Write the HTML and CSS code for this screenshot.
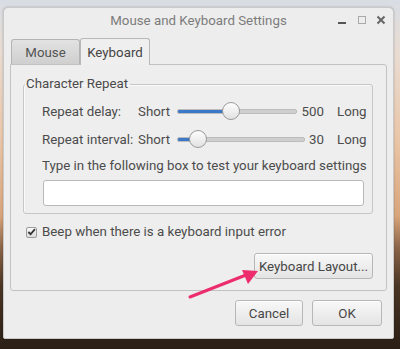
FILE: index.html
```html
<!doctype html>
<html>
<head>
<meta charset="utf-8">
<title>Mouse and Keyboard Settings</title>
<link rel="stylesheet" href="styles.css">
</head>
<body>
	<div class="window">
		<div class="titlebar">
			<span class="title">Mouse and Keyboard Settings</span>
			<div class="wm-btns">
				<span class="wm-min"></span>
				<span class="wm-max"></span>
				<span class="wm-close">
					<svg width="10" height="10" viewBox="0 0 10 10"><path d="M1.5 1.5 L8.5 8.5 M8.5 1.5 L1.5 8.5" stroke="#666" stroke-width="2"/></svg>
				</span>
			</div>
		</div>

		<div class="body">
			<div class="tabs">
				<span class="tab">Mouse</span>
				<span class="tab active">Keyboard</span>
			</div>
			<div class="notebook">
				<fieldset class="group">
					<legend>Character Repeat</legend>
					<div class="row first">
						<span class="lbl">Repeat delay:</span>
						<span class="short">Short</span>
						<div class="slider s-delay">
							<div class="track"><div class="fill" style="width:54px"></div></div>
							<div class="thumb" style="left:45px"></div>
						</div>
						<span class="val">500</span>
						<span class="long">Long</span>
					</div>
					<div class="row">
						<span class="lbl">Repeat interval:</span>
						<span class="short">Short</span>
						<div class="slider s-interval">
							<div class="track"><div class="fill" style="width:21px"></div></div>
							<div class="thumb" style="left:12px"></div>
						</div>
						<span class="val">30</span>
						<span class="long">Long</span>
					</div>
					<div class="hint">Type in the following box to test your keyboard settings</div>
					<div class="entry"></div>
				</fieldset>

				<div class="check">
					<span class="box">
						<svg width="10" height="10" viewBox="0 0 10 10"><path d="M1.5 5 L4 7.5 L8.8 1.8" fill="none" stroke="#333" stroke-width="2"/></svg>
					</span>
					<span>Beep when there is a keyboard input error</span>
				</div>

				<div class="layout-row">
					<span class="btn btn-layout">Keyboard Layout...</span>
				</div>
			</div>

			<div class="actions">
				<span class="btn btn-cancel">Cancel</span>
				<span class="btn btn-ok">OK</span>
			</div>
		</div>
	</div>

	<svg class="arrow" width="400" height="349" viewBox="0 0 400 349">
		<path d="M190 297 L246 275" stroke="#ec2c6c" stroke-width="3" stroke-linecap="round"/>
		<path d="M258 271 L242 270 L248 284 Z" fill="#ec2c6c"/>
	</svg>
</body>
</html>
```

FILE: styles.css
```css
* { margin:0; padding:0; box-sizing:border-box; }
html, body { width:400px; height:349px; overflow:hidden; }
body { position:relative; font-family:Roboto, "Noto Sans", sans-serif; font-size:13.3px; color:#4c4c4c;
	background:linear-gradient(180deg, #d8dde4 0%, #e9dcd2 15%, #eac6a8 40%, #d8a47a 62%, #8a6448 71%, #4a3524 82%, #2a1f16 100%); }

.window { width:391px; height:332px; margin:7px 0 0 3px; background:#ededed; border:1px solid #c9c9c9; border-radius:5px 5px 2px 2px; display:flex; flex-direction:column; box-shadow:0 0 2px rgba(0,0,0,.25); }

.titlebar { height:24px; display:flex; align-items:center; justify-content:center; position:relative; flex-shrink:0; }
.title { color:#7c7c7c; }
.wm-btns { position:absolute; right:7px; top:7px; display:flex; align-items:center; gap:10px; }
.wm-min { width:8px; height:2px; background:#555; margin-top:6px; }
.wm-max { width:8px; height:8px; border:1px solid #aaa; margin-left:2px; }
.wm-close { width:10px; height:10px; display:flex; }

.body { flex:1; padding:5px 6px 0 6px; display:flex; flex-direction:column; }

.tabs { display:flex; align-items:flex-end; height:27px; padding-left:1px; }
.tab { height:25px; width:69px; display:flex; align-items:center; justify-content:center; border:1px solid #b4b4b4; border-bottom:none; border-radius:3px 3px 0 0; background:linear-gradient(#e2e2e2, #cfcfcf); color:#555; }
.tab.active { height:27px; width:70px; background:#efefef; color:#444; border-color:#b8b8b8; margin-bottom:-1px; position:relative; }

.notebook { height:227px; border:1px solid #c2c2c2; border-radius:0 3px 3px 3px; background:#eeeeee; padding:11px 13px 0 12px; display:flex; flex-direction:column; }

.group { border:1px solid #c6c6c6; border-radius:3px; padding:5px 0 7px 18px; box-shadow:inset 1px 1px 0 #fafafa; }
.group legend { padding:0 2px 0 1px; margin-left:-17px; color:#4a4a4a; line-height:16px; }

.row { display:flex; align-items:center; height:28px; }
.lbl { width:96px; }
.short { width:39px; }
.slider { position:relative; height:20px; display:flex; align-items:center; }
.s-delay { width:120px; }
.s-interval { width:128px; }
.track { width:100%; height:5px; background:#cfcfcf; border:1px solid #bcbcbc; border-radius:2px; overflow:hidden; }
.fill { height:100%; background:#3c78c8; }
.thumb { position:absolute; top:1px; width:18px; height:18px; border-radius:50%; border:1px solid #9a9a9a; background:linear-gradient(#fdfdfd, #e2e2e2); }
.val { flex:1; text-align:right; }
.long { width:48px; padding-left:13px; }

.hint { margin-top:2px; line-height:22px; }
.entry { margin-top:3px; margin-left:1px; width:321px; height:26px; background:#fff; border:1px solid #b9b9b9; border-radius:3px; }

.check { display:flex; align-items:center; gap:5px; margin-top:9px; margin-left:3px; line-height:18px; }
.box { width:11px; height:11px; border:1px solid #9c9c9c; border-radius:2px; background:linear-gradient(#fafafa, #dcdcdc); display:flex; align-items:center; justify-content:center; }

.layout-row { display:flex; justify-content:flex-end; margin-top:12px; }
.btn { display:flex; align-items:center; justify-content:center; height:26px; border:1px solid #b7b7b7; border-radius:3px; background:linear-gradient(#f8f8f8, #e4e4e4); color:#474747; box-shadow:inset 0 1px 0 #fff; }
.btn-layout { width:119px; }

.actions { display:flex; justify-content:flex-end; gap:9px; margin-top:9px; padding-right:5px; }
.btn-cancel { width:68px; }
.btn-ok { width:70px; }

.arrow { position:absolute; left:0; top:0; }
```
